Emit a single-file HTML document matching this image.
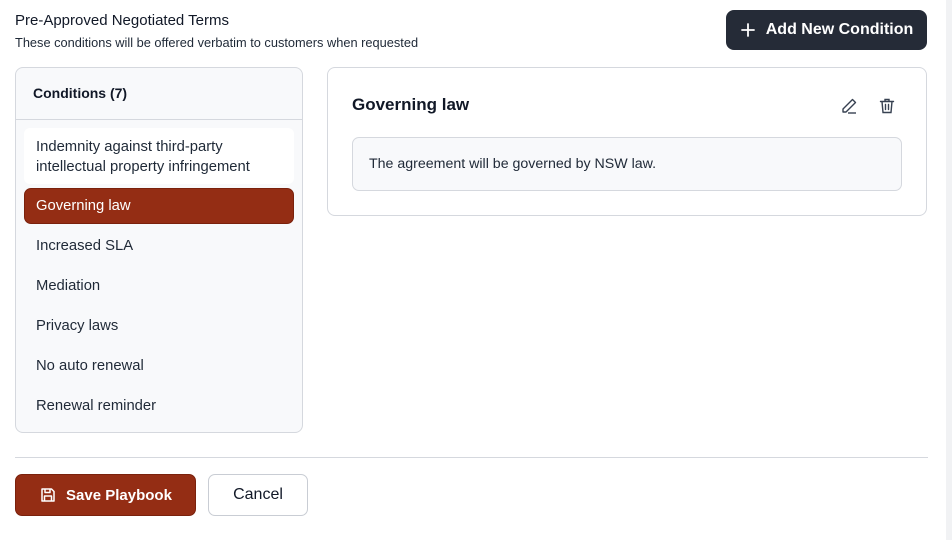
<!DOCTYPE html>
<html><head><style>
*{box-sizing:border-box;margin:0;padding:0}
body{width:952px;height:540px;background:#fff;font-family:"Liberation Sans",sans-serif;color:#111827;position:relative;overflow:hidden}
.a{position:absolute}
.item{position:absolute;left:36px;font-size:14.8px;color:#1f2937}
</style></head><body>
<div class="a" style="right:0;top:0;width:6px;height:540px;background:#f1f2f4"></div>
<div class="a" style="left:15px;top:12px;font-size:15px;color:#111827">Pre-Approved Negotiated Terms</div>
<div class="a" style="left:15px;top:35px;font-size:12.8px;color:#1f2937">These conditions will be offered verbatim to customers when requested</div>
<div class="a" style="left:726px;top:10px;width:201px;height:40px;background:#252b37;border-radius:8px;color:#fff;font-size:16px;font-weight:bold;display:flex;align-items:center;justify-content:center;gap:10px">
<svg width="16" height="16" viewBox="0 0 16 16"><path d="M8 2v12M2 8h12" stroke="#fff" stroke-width="1.8" stroke-linecap="round"/></svg>Add New Condition</div>

<div class="a" style="left:15px;top:67px;width:288px;height:366px;background:#f8f9fb;border:1px solid #d5d8de;border-radius:8px"></div>
<div class="a" style="left:33px;top:85px;font-size:14px;font-weight:bold">Conditions (7)</div>
<div class="a" style="left:16px;top:119px;width:286px;height:1px;background:#d5d8de"></div>
<div class="a" style="left:24px;top:128px;width:270px;height:56px;background:#fff;border-radius:6px"></div>
<div class="item" style="top:137px;line-height:20px">Indemnity against third-party<br>intellectual property infringement</div>
<div class="a" style="left:24px;top:188px;width:270px;height:36px;background:#942d14;border:1px solid #7a210c;border-radius:7px"></div>
<div class="item" style="top:198px;color:#fff">Governing law</div>
<div class="item" style="top:238px">Increased SLA</div>
<div class="item" style="top:278px">Mediation</div>
<div class="item" style="top:318px">Privacy laws</div>
<div class="item" style="top:358px">No auto renewal</div>
<div class="item" style="top:398px">Renewal reminder</div>

<div class="a" style="left:327px;top:67px;width:600px;height:149px;background:#fff;border:1px solid #d5d8de;border-radius:8px"></div>
<div class="a" style="left:352px;top:95px;font-size:17px;font-weight:bold">Governing law</div>
<svg class="a" style="left:840px;top:97px" width="18" height="18" viewBox="0 0 18 18" fill="none" stroke="#374151" stroke-width="1.4" stroke-linejoin="round"><path d="M12.5 2.5l3 3L6 15H3v-3z"/><path d="M8 16h8"/></svg>
<svg class="a" style="left:878px;top:97px" width="18" height="18" viewBox="0 0 18 18" fill="none" stroke="#374151" stroke-width="1.4" stroke-linecap="round"><path d="M2.5 4.5h13M7 4.5V2.5h4v2M4 4.5l1 11h8l1-11M7.5 7.5v5M10.5 7.5v5"/></svg>
<div class="a" style="left:352px;top:137px;width:550px;height:54px;background:#f8f9fb;border:1px solid #d5d8de;border-radius:7px"></div>
<div class="a" style="left:369px;top:156px;font-size:14.2px;color:#1f2937">The agreement will be governed by NSW law.</div>

<div class="a" style="left:15px;top:457px;width:913px;height:1px;background:#d5d8de"></div>
<div class="a" style="left:15px;top:474px;width:181px;height:42px;background:#942d14;border:1px solid #7a210c;border-radius:7px;color:#fff;font-size:15px;font-weight:bold;display:flex;align-items:center;justify-content:center;gap:9px">
<svg width="18" height="18" viewBox="0 0 18 18" fill="none" stroke="#fff" stroke-width="1.5" stroke-linejoin="round"><path d="M3 3h9.5L15 5.5V15H3z"/><path d="M6 3v3.5h5V3M5.5 15v-5h7v5"/></svg>Save Playbook</div>
<div class="a" style="left:208px;top:474px;width:100px;height:42px;background:#fff;border:1px solid #c9cdd4;border-radius:7px;font-size:16px;display:flex;align-items:center;justify-content:center;color:#111827">Cancel</div>
</body></html>
